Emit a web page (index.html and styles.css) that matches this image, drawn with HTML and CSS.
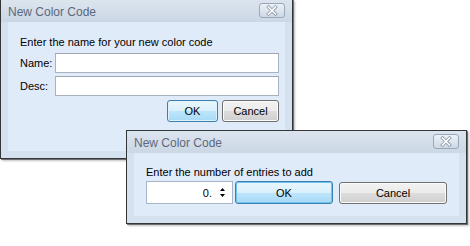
FILE: index.html
```html
<!DOCTYPE html>
<html>
<head>
<meta charset="utf-8">
<link rel="stylesheet" href="styles.css">
</head>
<body>
<div class="dlg dlg-name">
  <div class="titlebar">
    <span class="title">New Color Code</span>
    <span class="close"><svg width="26" height="15" viewBox="0 0 26 15"><defs><linearGradient id="cg1" x1="0" y1="0" x2="0" y2="1"><stop offset="0" stop-color="#eef2f7"/><stop offset="0.5" stop-color="#dde5ee"/><stop offset="1" stop-color="#ccd7e4"/></linearGradient></defs><rect x="0.5" y="0.5" width="25" height="14" rx="2.5" fill="url(#cg1)" stroke="#98a7b9"/><path d="M9.5 4 L16.5 11 M16.5 4 L9.5 11" stroke="#8e9aaa" stroke-width="3.2" stroke-linecap="square"/><path d="M9.5 4 L16.5 11 M16.5 4 L9.5 11" stroke="#ffffff" stroke-width="1.6" stroke-linecap="square"/></svg></span>
  </div>
  <div class="client">
    <div class="prompt">Enter the name for your new color code</div>
    <div class="field"><span class="label">Name:</span><span class="textbox"></span></div>
    <div class="field"><span class="label">Desc:</span><span class="textbox"></span></div>
    <div class="buttons">
      <span class="btn btn-default ok1">OK</span>
      <span class="btn cancel1">Cancel</span>
    </div>
  </div>
</div>

<div class="dlg dlg-count">
  <div class="titlebar">
    <span class="title">New Color Code</span>
    <span class="close"><svg width="26" height="15" viewBox="0 0 26 15"><defs><linearGradient id="cg2" x1="0" y1="0" x2="0" y2="1"><stop offset="0" stop-color="#eef2f7"/><stop offset="0.5" stop-color="#dde5ee"/><stop offset="1" stop-color="#ccd7e4"/></linearGradient></defs><rect x="0.5" y="0.5" width="25" height="14" rx="2.5" fill="url(#cg2)" stroke="#98a7b9"/><path d="M9.5 4 L16.5 11 M16.5 4 L9.5 11" stroke="#8e9aaa" stroke-width="3.2" stroke-linecap="square"/><path d="M9.5 4 L16.5 11 M16.5 4 L9.5 11" stroke="#ffffff" stroke-width="1.6" stroke-linecap="square"/></svg></span>
  </div>
  <div class="client">
    <div class="prompt">Enter the number of entries to add</div>
    <div class="row">
      <span class="spin"><span class="spin-value">0.</span><span class="spin-arrows"><svg width="5" height="9" viewBox="0 0 5 9"><path d="M2.5 0 L5 3 L0 3 Z M0 6 L5 6 L2.5 9 Z" fill="#000"/></svg></span></span>
      <span class="btn btn-default btn-focus ok2">OK</span>
      <span class="btn cancel2">Cancel</span>
    </div>
  </div>
</div>
</body>
</html>
```

FILE: styles.css
```css
html, body {
  margin: 0;
  padding: 0;
  background: #ffffff;
  width: 470px;
  height: 246px;
  overflow: hidden;
  font-family: "Liberation Sans", Arial, sans-serif;
  font-size: 11px;
  color: #000;
}

.dlg {
  position: absolute;
  box-sizing: border-box;
  border: 1px solid #333638;
  background: #d5e1ee;
  display: flex;
  flex-direction: column;
  box-shadow: 1px 1px 0 rgba(40, 40, 40, 0.55), 2px 2px 2px rgba(0, 0, 0, 0.25);
}

.dlg-name {
  left: 0;
  top: -1px;
  width: 293px;
  height: 160px;
}

.dlg-count {
  left: 126px;
  top: 130px;
  width: 341px;
  height: 94px;
}

.titlebar {
  height: 22px;
  flex: none;
  display: flex;
  align-items: flex-start;
  justify-content: space-between;
  padding: 0 7px;
  background: linear-gradient(#dce4ee, #cbd7e5);
}

.title {
  font-size: 12px;
  line-height: 24px;
  color: #5b697c;
  padding-left: 0;
}

.close {
  display: block;
  margin-top: 3px;
  height: 15px;
}

.close svg {
  display: block;
}

.client {
  flex: 1;
  margin: 0 7px 7px 7px;
  background: #e0ebfa;
  box-sizing: border-box;
}

.dlg-name .client {
  padding: 14px 6px 0 12px;
}

.dlg-count .client {
  padding: 13px 12px 0 12px;
}

.prompt {
  line-height: 13px;
  white-space: nowrap;
}

.field {
  display: flex;
  align-items: center;
  height: 20px;
  margin-top: 3px;
}

.dlg-name .prompt + .field {
  margin-top: 4px;
}

.label {
  width: 35px;
  flex: none;
}

.textbox {
  flex: 1;
  height: 20px;
  box-sizing: border-box;
  background: #fff;
  border: 1px solid #a9b2bd;
  border-top-color: #9da6b1;
}

.buttons {
  display: flex;
  justify-content: flex-end;
  gap: 4px;
  margin-top: 4px;
}

.btn {
  display: flex;
  align-items: center;
  justify-content: center;
  box-sizing: border-box;
  height: 22px;
  border: 1px solid #707070;
  border-radius: 3px;
  background: linear-gradient(#f2f2f2 0%, #ebebeb 50%, #dddddd 50%, #cfcfcf 100%);
  box-shadow: inset 0 0 0 1px #fbfbfb;
  color: #000;
}

.btn-default {
  border-color: #3c7fb1;
  background: linear-gradient(#eaf6fd 0%, #d9f0fc 50%, #bee6fd 50%, #a7d9f5 100%);
  box-shadow: inset 0 0 0 1px #dff1fb;
}

.btn-focus {
  box-shadow: inset 0 0 0 1px #6fc3ec;
}

.ok1 { width: 51px; }
.cancel1 { width: 57px; }

.row {
  display: flex;
  align-items: center;
  margin-top: 2px;
  height: 23px;
}

.spin {
  width: 87px;
  height: 23px;
  box-sizing: border-box;
  background: #fff;
  border: 1px solid #a6b6c9;
  display: flex;
  align-items: center;
  justify-content: flex-end;
  padding-right: 7px;
}

.spin-value {
  margin-right: 8px;
}

.spin-arrows svg {
  display: block;
}

.ok2 {
  width: 98px;
  height: 23px;
  margin-left: 2px;
}

.cancel2 {
  width: 108px;
  margin-left: 6px;
}
```
